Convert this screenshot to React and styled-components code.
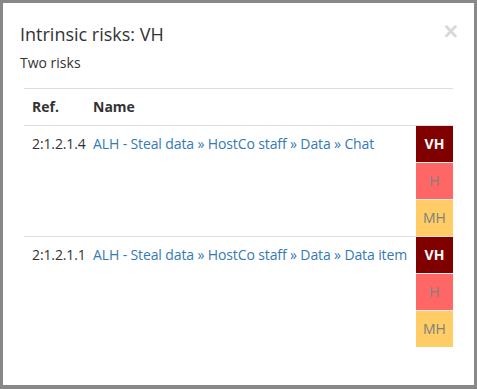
import styled, { createGlobalStyle } from "styled-components";

const GlobalStyle = createGlobalStyle`
  html, body {
    margin: 0;
    padding: 0;
    background: #888888;
  }
  body {
    font-family: "Open Sans", "Liberation Sans", sans-serif;
    font-size: 14px;
    line-height: 20px;
    color: #333333;
  }
`;

const risks = [
  { ref: "2:1.2.1.4", name: "ALH - Steal data » HostCo staff » Data » Chat" },
  { ref: "2:1.2.1.1", name: "ALH - Steal data » HostCo staff » Data » Data item" },
];

const levels = [
  { label: "VH", bg: "#800000", fg: "#ffffff", bold: true },
  { label: "H", bg: "#ff6666", fg: "#808080" },
  { label: "MH", bg: "#ffcc66", fg: "#808080" },
];

const App = () => {
  return (
    <>
      <GlobalStyle />
      <Modal>
        <Header>
          <Title>Intrinsic risks: VH</Title>
          <Close>×</Close>
        </Header>
        <Subtitle>Two risks</Subtitle>
        <Table>
          <colgroup>
            <col style={{ width: 61 }} />
            <col />
            <col style={{ width: 37 }} />
          </colgroup>
          <thead>
            <tr>
              <Th>Ref.</Th>
              <Th>Name</Th>
              <Th $pad="0" />
            </tr>
          </thead>
          <tbody>
            {risks.map((r) => (
              <Row key={r.ref}>
                <Td>{r.ref}</Td>
                <Td>
                  <Link href="#">{r.name}</Link>
                </Td>
                <LevelCell>
                  {levels.map((l) => (
                    <Level key={l.label} $bg={l.bg} $fg={l.fg} $bold={l.bold}>
                      {l.label}
                    </Level>
                  ))}
                </LevelCell>
              </Row>
            ))}
          </tbody>
        </Table>
      </Modal>
    </>
  );
};

const Modal = styled.div`
  margin: 3px 3px 0 3px;
  height: 382px;
  box-sizing: border-box;
  background: #ffffff;
  padding: 18px 16px 0 17px;
`;

const Header = styled.div`
  display: flex;
  justify-content: space-between;
  align-items: flex-start;
`;

const Title = styled.h4`
  margin: 0;
  font-size: 18px;
  font-weight: 400;
  line-height: 26px;
  color: #333333;
`;

const Close = styled.span`
  font-family: "Liberation Sans", sans-serif;
  font-size: 25px;
  font-weight: 700;
  line-height: 20px;
  color: #000000;
  opacity: 0.15;
`;

const Subtitle = styled.p`
  margin: 6px 0 0 0;
  font-size: 14px;
`;

const Table = styled.table`
  margin: 15px 0 0 4px;
  width: 429px;
  table-layout: fixed;
  border-collapse: collapse;
  border-top: 1px solid #dddddd;
`;

const Th = styled.th`
  text-align: left;
  font-weight: 700;
  padding: ${(p) => p.$pad ?? "8px"};
  line-height: 20px;
  border-bottom: 1px solid #dddddd;
`;

const Row = styled.tr`
  border-bottom: 1px solid #dddddd;
  &:last-child {
    border-bottom: none;
  }
`;

const Td = styled.td`
  vertical-align: top;
  padding: 8px;
  line-height: 20px;
  white-space: nowrap;
  letter-spacing: -0.12px;
`;

const Link = styled.a`
  color: #337ab7;
  text-decoration: none;
`;

const LevelCell = styled.td`
  padding: 0;
  vertical-align: top;
`;

const Level = styled.div`
  background: ${(p) => p.$bg};
  color: ${(p) => p.$fg};
  font-weight: ${(p) => (p.$bold ? 700 : 400)};
  text-align: center;
  padding: 8px 0;
  line-height: 20px;
  border-bottom: 1px solid #eeeeee;
  &:last-child {
    border-bottom: none;
  }
`;

export default App;
